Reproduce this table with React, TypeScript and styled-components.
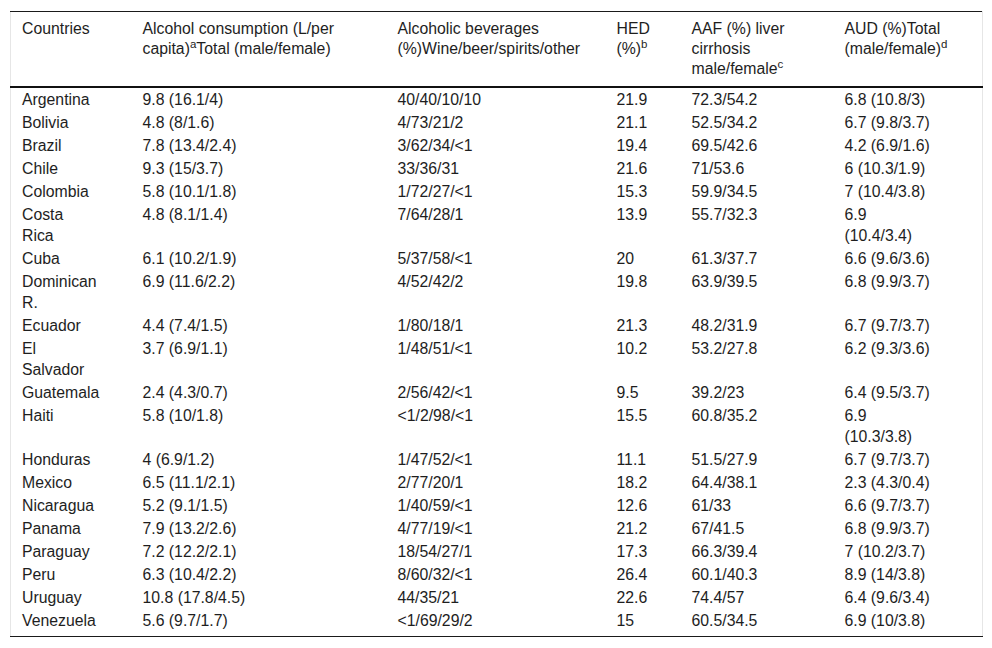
import styled, { createGlobalStyle } from "styled-components";

interface CountryRow {
  country: string;
  consumption: string;
  beverages: string;
  hed: string;
  aaf: string;
  aud: string;
}

const GlobalStyle = createGlobalStyle`
  body {
    margin: 0;
    background: #fff;
    font-family: "Liberation Sans", Arial, sans-serif;
  }
`;

const Page = styled.div`
  padding: 11px 11px 0 10px;
`;

const Table = styled.table`
  width: 972px;
  border-collapse: collapse;
  table-layout: fixed;
  border-left: 1px solid #e6e6e6;
  border-right: 1px solid #e6e6e6;
  border-top: 1px solid #1a1a1a;
  border-bottom: 1px solid #1a1a1a;
  font-size: 15.8px;
  color: #1e1e1e;
`;

const HeadRow = styled.tr`
  border-bottom: 2px solid #111;
`;

const BodyRow = styled.tr`
  &:last-child td {
    padding-bottom: 5px;
  }
`;

const Th = styled.th<{ $w: number }>`
  box-sizing: border-box;
  width: ${(p) => p.$w}px;
  text-align: left;
  vertical-align: top;
  font-weight: normal;
  line-height: 20px;
  padding: 7px 4px 7px 11px;
  white-space: pre;
`;

const Td = styled.td`
  vertical-align: top;
  line-height: 21px;
  padding: 1px 4px 1px 11px;
  white-space: pre;
`;

const Sup = styled.sup`
  font-size: 11.5px;
  line-height: 0;
  vertical-align: 6px;
`;

const rows: CountryRow[] = [
  { country: "Argentina", consumption: "9.8 (16.1/4)", beverages: "40/40/10/10", hed: "21.9", aaf: "72.3/54.2", aud: "6.8 (10.8/3)" },
  { country: "Bolivia", consumption: "4.8 (8/1.6)", beverages: "4/73/21/2", hed: "21.1", aaf: "52.5/34.2", aud: "6.7 (9.8/3.7)" },
  { country: "Brazil", consumption: "7.8 (13.4/2.4)", beverages: "3/62/34/<1", hed: "19.4", aaf: "69.5/42.6", aud: "4.2 (6.9/1.6)" },
  { country: "Chile", consumption: "9.3 (15/3.7)", beverages: "33/36/31", hed: "21.6", aaf: "71/53.6", aud: "6 (10.3/1.9)" },
  { country: "Colombia", consumption: "5.8 (10.1/1.8)", beverages: "1/72/27/<1", hed: "15.3", aaf: "59.9/34.5", aud: "7 (10.4/3.8)" },
  { country: "Costa\nRica", consumption: "4.8 (8.1/1.4)", beverages: "7/64/28/1", hed: "13.9", aaf: "55.7/32.3", aud: "6.9\n(10.4/3.4)" },
  { country: "Cuba", consumption: "6.1 (10.2/1.9)", beverages: "5/37/58/<1", hed: "20", aaf: "61.3/37.7", aud: "6.6 (9.6/3.6)" },
  { country: "Dominican\nR.", consumption: "6.9 (11.6/2.2)", beverages: "4/52/42/2", hed: "19.8", aaf: "63.9/39.5", aud: "6.8 (9.9/3.7)" },
  { country: "Ecuador", consumption: "4.4 (7.4/1.5)", beverages: "1/80/18/1", hed: "21.3", aaf: "48.2/31.9", aud: "6.7 (9.7/3.7)" },
  { country: "El\nSalvador", consumption: "3.7 (6.9/1.1)", beverages: "1/48/51/<1", hed: "10.2", aaf: "53.2/27.8", aud: "6.2 (9.3/3.6)" },
  { country: "Guatemala", consumption: "2.4 (4.3/0.7)", beverages: "2/56/42/<1", hed: "9.5", aaf: "39.2/23", aud: "6.4 (9.5/3.7)" },
  { country: "Haiti", consumption: "5.8 (10/1.8)", beverages: "<1/2/98/<1", hed: "15.5", aaf: "60.8/35.2", aud: "6.9\n(10.3/3.8)" },
  { country: "Honduras", consumption: "4 (6.9/1.2)", beverages: "1/47/52/<1", hed: "11.1", aaf: "51.5/27.9", aud: "6.7 (9.7/3.7)" },
  { country: "Mexico", consumption: "6.5 (11.1/2.1)", beverages: "2/77/20/1", hed: "18.2", aaf: "64.4/38.1", aud: "2.3 (4.3/0.4)" },
  { country: "Nicaragua", consumption: "5.2 (9.1/1.5)", beverages: "1/40/59/<1", hed: "12.6", aaf: "61/33", aud: "6.6 (9.7/3.7)" },
  { country: "Panama", consumption: "7.9 (13.2/2.6)", beverages: "4/77/19/<1", hed: "21.2", aaf: "67/41.5", aud: "6.8 (9.9/3.7)" },
  { country: "Paraguay", consumption: "7.2 (12.2/2.1)", beverages: "18/54/27/1", hed: "17.3", aaf: "66.3/39.4", aud: "7 (10.2/3.7)" },
  { country: "Peru", consumption: "6.3 (10.4/2.2)", beverages: "8/60/32/<1", hed: "26.4", aaf: "60.1/40.3", aud: "8.9 (14/3.8)" },
  { country: "Uruguay", consumption: "10.8 (17.8/4.5)", beverages: "44/35/21", hed: "22.6", aaf: "74.4/57", aud: "6.4 (9.6/3.4)" },
  { country: "Venezuela", consumption: "5.6 (9.7/1.7)", beverages: "<1/69/29/2", hed: "15", aaf: "60.5/34.5", aud: "6.9 (10/3.8)" },
];

function App() {
  return (
    <Page>
      <GlobalStyle />
      <Table>
        <thead>
          <HeadRow>
            <Th $w={121}>Countries</Th>
            <Th $w={255}>
              {"Alcohol consumption (L/per\ncapita)"}
              <Sup>a</Sup>Total (male/female)
            </Th>
            <Th $w={219}>{"Alcoholic beverages\n(%)Wine/beer/spirits/other"}</Th>
            <Th $w={75}>
              {"HED\n(%)"}
              <Sup>b</Sup>
            </Th>
            <Th $w={153}>
              {"AAF (%) liver\ncirrhosis\nmale/female"}
              <Sup>c</Sup>
            </Th>
            <Th $w={149}>
              {"AUD (%)Total\n(male/female)"}
              <Sup>d</Sup>
            </Th>
          </HeadRow>
        </thead>
        <tbody>
          {rows.map((r) => (
            <BodyRow key={r.country}>
              <Td>{r.country}</Td>
              <Td>{r.consumption}</Td>
              <Td>{r.beverages}</Td>
              <Td>{r.hed}</Td>
              <Td>{r.aaf}</Td>
              <Td>{r.aud}</Td>
            </BodyRow>
          ))}
        </tbody>
      </Table>
    </Page>
  );
}

export default App;
